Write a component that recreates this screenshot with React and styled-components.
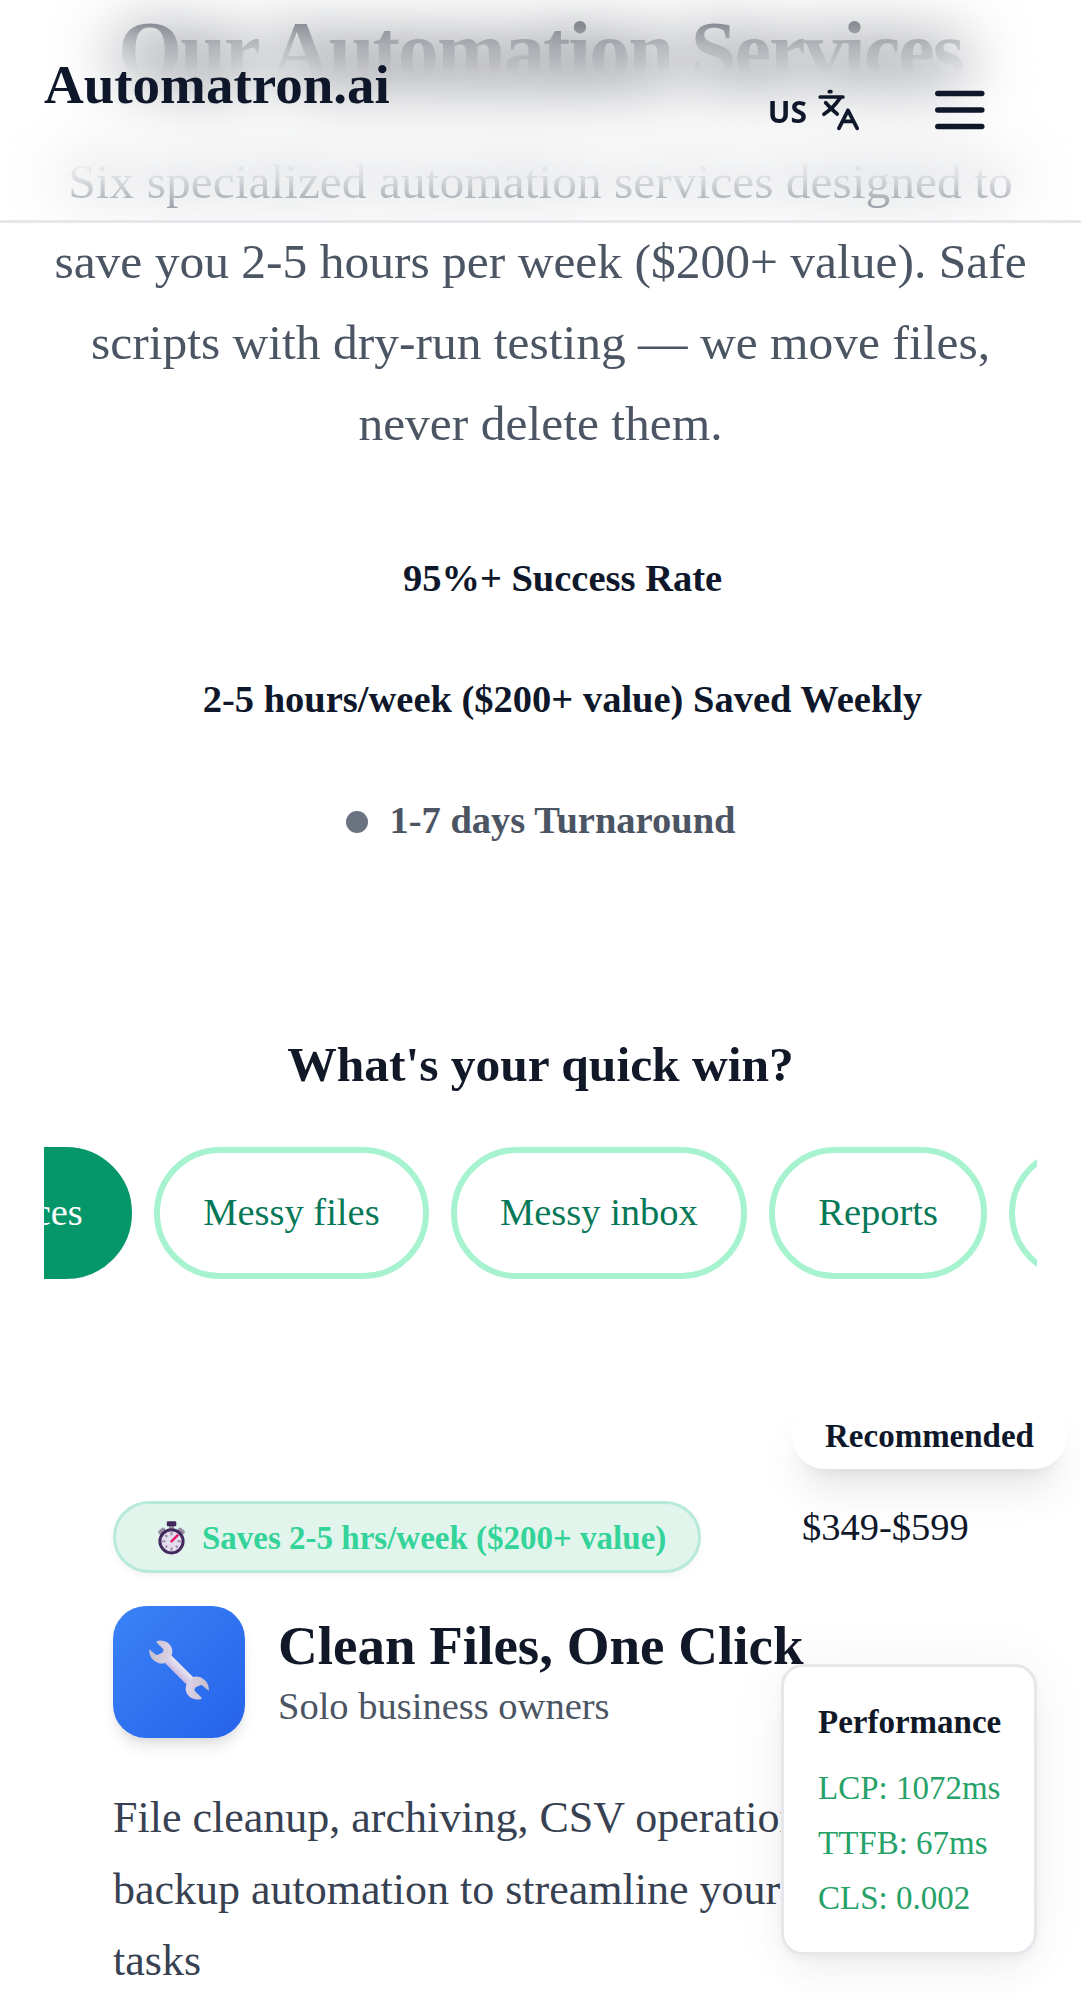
import React from 'react';
import styled, { createGlobalStyle } from 'styled-components';

const Global = createGlobalStyle`
  * { box-sizing: border-box; }
  html, body { margin: 0; background: #fff; }
  body { font-family: "Liberation Serif", "Times New Roman", serif; color: #111827; overflow: hidden; height: 1999px; }
  h1, h2, h3, p { margin: 0; }
`;

const Page = styled.div`
  position: relative;
  width: 1081px;
  height: 1999px;
  overflow: hidden;
  background: #fff;
`;

const Header = styled.header`
  position: absolute;
  z-index: 20;
  top: 0;
  left: 0;
  right: 0;
  height: 223px;
  border-bottom: 3px solid #e5e7eb;
  display: flex;
  justify-content: space-between;
  align-items: flex-start;
  padding: 52px 96px 0 44px;
`;

const Frost = styled.div`
  position: absolute;
  z-index: 10;
  inset: 0 0 auto 0;
  height: 220px;
  backdrop-filter: blur(33px);
  mask-image: linear-gradient(to bottom, rgba(0,0,0,0.74) 0, rgba(0,0,0,0.82) 22px, rgba(0,0,0,0.95) 46px, #000 72px, #000 160px, rgba(0,0,0,0.98) 176px, rgba(0,0,0,0.88) 197px, rgba(0,0,0,0.7) 220px);
`;

const Brand = styled.div`
  font-size: 55px;
  line-height: 66px;
  font-weight: 700;
  color: #0f172a;
`;

const Tools = styled.div`
  display: flex;
  align-items: center;
  margin-top: 22px;
  height: 72px;
`;

const Lang = styled.span`
  font: 700 30px/40px "Noto Sans", sans-serif;
  color: #0f172a;
  margin-right: 10px;
  padding-top: 3px;
`;

const MenuButton = styled.span`
  display: flex;
  margin-left: 73px;
`;

const Hero = styled.section`
  text-align: center;
  padding-top: 2px;
`;

const Title = styled.h1`
  font-size: 82.5px;
  line-height: 96px;
  letter-spacing: -0.025em;
  color: #111827;
`;

const Lead = styled.p`
  width: 993px;
  margin: 43.5px auto 0;
  font-size: 49.5px;
  line-height: 80.7px;
  color: #4b5563;
`;

const Stats = styled.div`
  display: flex;
  flex-direction: column;
  align-items: center;
  gap: 66px;
  margin-top: 86px;
`;

const Stat = styled.div`
  display: flex;
  align-items: center;
  gap: 22px;
  height: 55px;
  font-size: 38.5px;
  font-weight: 700;
  color: ${p => (p.$muted ? '#4b5563' : '#0f172a')};
`;

const Dot = styled.span`
  width: 22px;
  height: 22px;
  margin-top: 4px;
  border-radius: 50%;
  background: ${p => (p.$muted ? '#6b7280' : 'transparent')};
`;

const Question = styled.h2`
  margin-top: 179px;
  text-align: center;
  font-size: 49.5px;
  line-height: 77px;
  color: #111827;
`;

const Filters = styled.div`
  display: flex;
  justify-content: flex-start;
  gap: 22px;
  margin: 43.7px 44px 0;
  overflow: hidden;
`;

const Pill = styled.button`
  flex: none;
  width: ${p => (p.$active ? '300px' : 'auto')};
  height: 132px;
  padding: 0 43.2px 2px;
  border: 6px solid ${p => (p.$active ? '#059669' : '#a7f3d0')};
  border-radius: 66px;
  background: ${p => (p.$active ? '#059669' : '#fff')};
  color: ${p => (p.$active ? '#fff' : '#047857')};
  font: 400 38.5px/55px "Liberation Serif", serif;
  text-align: right;
  margin-left: ${p => (p.$active ? '-212px' : '0')};
`;

const Card = styled.article`
  position: relative;
  margin: 145px 44px 0;
  padding: 77px 69px 0;
`;

const Recommended = styled.div`
  position: absolute;
  top: -21px;
  right: -30px;
  width: 275px;
  height: 66px;
  border-radius: 33px;
  background: #fff;
  box-shadow: 0 27px 41px -8px rgba(0, 0, 0, 0.1), 0 11px 16px -11px rgba(0, 0, 0, 0.1);
  text-align: center;
  font-size: 33px;
  line-height: 67px;
  font-weight: 700;
  color: #0f172a;
`;

const CardTop = styled.div`
  display: flex;
  justify-content: space-between;
  align-items: flex-start;
`;

const Badge = styled.div`
  display: flex;
  align-items: center;
  width: 588px;
  height: 72px;
  padding: 2px 0 0 42px;
  border: 3px solid #b7ead8;
  border-radius: 36px;
  background: #e1f5ed;
  box-shadow: 0 3px 6px rgba(0, 0, 0, 0.05);
  font-size: 33px;
  font-weight: 700;
  white-space: nowrap;
  color: #34d399;
  svg { flex: none; margin-right: 17px; }
`;

const Price = styled.div`
  width: 167px;
  margin-right: -1px;
  font-size: 38.5px;
  line-height: 52px;
  color: #0f172a;
`;

const Heading = styled.div`
  display: flex;
  gap: 33px;
  margin-top: 33px;
`;

const IconTile = styled.div`
  display: grid;
  place-items: center;
  width: 132px;
  height: 132px;
  padding-bottom: 5px;
  border-radius: 33px;
  background: linear-gradient(135deg, #3b82f6, #2563eb);
  box-shadow: 0 11px 16px -3px rgba(0, 0, 0, 0.1), 0 5px 11px -5px rgba(0, 0, 0, 0.1);
`;

const Name = styled.h3`
  margin-top: 5px;
  font-size: 55px;
  line-height: 69px;
  white-space: nowrap;
`;

const Audience = styled.p`
  font-size: 38.5px;
  line-height: 52px;
  color: #4b5563;
`;

const Description = styled.p`
  margin-top: 44px;
  font-size: 44px;
  line-height: 71.5px;
  color: #374151;
`;

const Perf = styled.aside`
  position: absolute;
  z-index: 30;
  left: 781px;
  top: 1664px;
  width: 256px;
  height: 291px;
  padding: 33px 0 0 34px;
  border: 3px solid #e5e7eb;
  border-radius: 22px;
  background: #fff;
  box-shadow: 0 27px 41px -8px rgba(0, 0, 0, 0.04), 0 0 60px rgba(0, 0, 0, 0.05), 0 5px 10px rgba(0, 0, 0, 0.03);
  font-size: 33px;
  line-height: 44px;
`;

const PerfTitle = styled.div`
  font-weight: 700;
  margin-bottom: 22px;
  color: #111827;
`;

const Metric = styled.div`
  margin-top: 11px;
  color: #26a269;
`;

const TranslateIcon = () => (
  <svg width="44" height="44" viewBox="0 0 44 44" fill="none" stroke="#0f172a" strokeWidth="3.7" strokeLinecap="round" strokeLinejoin="round">
    <path d="M12.300 3.700h1.600M3.200 9h22.700M23 10Q17 19.500 6.900 26.200M8.700 14.700Q14 21 20.200 26M21.900 40.300L31 22.300l9.200 18M26.500 33.400h9" />
  </svg>
);

const MenuIcon = () => (
  <svg width="51" height="44" viewBox="0 0 51 44" stroke="#0f172a" strokeWidth="5.5" strokeLinecap="round">
    <path d="M3.800 5.400h44M3.800 22h44M3.800 38.500h44" />
  </svg>
);

const Stopwatch = () => (
  <svg width="27" height="34" viewBox="0 0 27 34">
    <rect x="11" y="4" width="5" height="5" fill="#998ea4" />
    <path d="M2.500 11l2.500-2M24.500 11l-2.500-2" stroke="#998ea4" strokeWidth="4.500" strokeLinecap="round" />
    <rect x="8.800" y="0.300" width="9.500" height="5" rx="1.200" fill="#41265c" />
    <circle cx="13.500" cy="20.300" r="11.600" fill="#e5dcef" stroke="#432a5e" strokeWidth="3" />
    <g stroke="#9b8fa8" strokeWidth="2">
      <path d="M13.500 11v3.300M13.500 26.500v3.300M4.200 20.300h3.300M19.500 20.300h3.300M7.300 14l2 2M17.800 24.600l2 2M7.300 26.600l2-2" />
    </g>
    <path d="M13.500 20.300l6-6" stroke="#e61b63" strokeWidth="2.500" strokeLinecap="round" />
  </svg>
);

const WRENCH_HEAD = 'M7.700 1C15-1 22 3 23.300 10Q23.500 14 22 17C19 23 14 24.500 9.500 23C3.500 21 -0.500 15.500 0.200 9.200L6.600 14.600Q7.500 15.300 8.600 14.800L13.200 12.700Q14.700 11.700 14.400 9.200L8.800 3.800Q7 2.300 7.700 1Z';

const Wrench = () => (
  <svg width="60" height="60" viewBox="0 0 60 60">
    <defs>
      <linearGradient id="shaft" gradientUnits="userSpaceOnUse" x1="26" y1="34" x2="34" y2="26">
        <stop offset="0" stopColor="#c9b6df" />
        <stop offset="0.5" stopColor="#dcd3ea" />
        <stop offset="1" stopColor="#ebe6f3" />
      </linearGradient>
      <linearGradient id="head" x1="0" y1="0.6" x2="1" y2="0.6">
        <stop offset="0" stopColor="#c6c0c9" />
        <stop offset="1" stopColor="#ddd3e8" />
      </linearGradient>
    </defs>
    <path d={WRENCH_HEAD} fill="url(#head)" />
    <path d={WRENCH_HEAD} fill="url(#head)" transform="rotate(180 30 30)" />
    <path d="M15.500 22.500l7-7L44.500 37.500l-7 7z" fill="url(#shaft)" />
  </svg>
);

export default function App() {
  return (
    <Page>
      <Global />
      <Hero>
        <Title>Our Automation Services</Title>
        <Lead>
          Six specialized automation services designed to<br />
          save you 2-5 hours per week ($200+ value). Safe<br />
          scripts with dry-run testing — we move files,<br />
          never delete them.
        </Lead>
        <Stats>
          <Stat><Dot />95%+ Success Rate</Stat>
          <Stat><Dot />2-5 hours/week ($200+ value) Saved Weekly</Stat>
          <Stat $muted><Dot $muted />1-7 days Turnaround</Stat>
        </Stats>
      </Hero>
      <Question>What's your quick win?</Question>
      <Filters>
        <Pill $active>All services</Pill>
        <Pill>Messy files</Pill>
        <Pill>Messy inbox</Pill>
        <Pill>Reports</Pill>
        <Pill>Custom</Pill>
      </Filters>
      <Card>
        <Recommended>Recommended</Recommended>
        <CardTop>
          <Badge><Stopwatch />Saves 2-5 hrs/week ($200+ value)</Badge>
          <Price>$349-$599</Price>
        </CardTop>
        <Heading>
          <IconTile><Wrench /></IconTile>
          <div>
            <Name>Clean Files, One Click</Name>
            <Audience>Solo business owners</Audience>
          </div>
        </Heading>
        <Description>
          File cleanup, archiving, CSV operations, and<br />
          backup automation to streamline your daily<br />
          tasks
        </Description>
      </Card>
      <Frost />
      <Header>
        <Brand>Automatron.ai</Brand>
        <Tools>
          <Lang>US</Lang>
          <TranslateIcon />
          <MenuButton><MenuIcon /></MenuButton>
        </Tools>
      </Header>
      <Perf>
        <PerfTitle>Performance</PerfTitle>
        <Metric>LCP: 1072ms</Metric>
        <Metric>TTFB: 67ms</Metric>
        <Metric>CLS: 0.002</Metric>
      </Perf>
    </Page>
  );
}
